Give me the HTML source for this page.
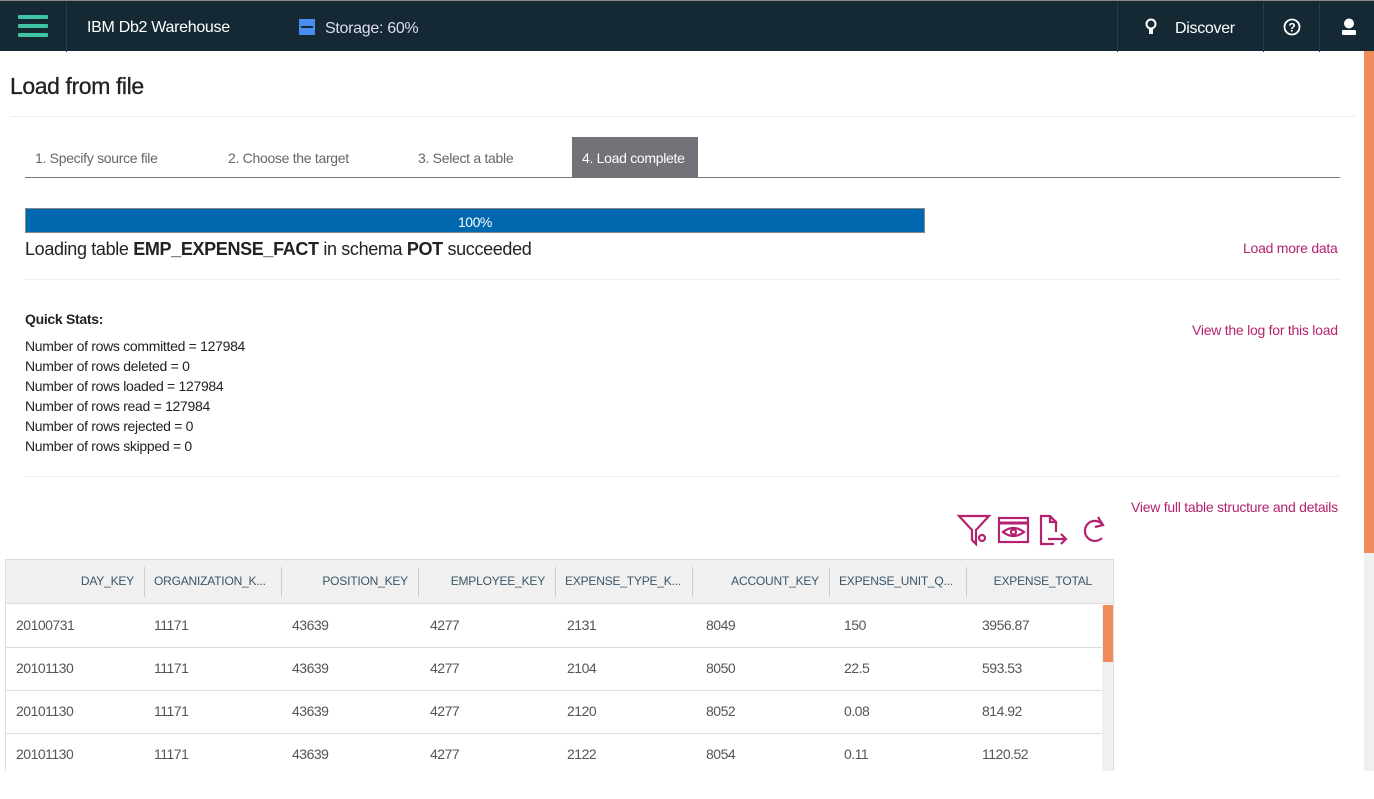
<!DOCTYPE html>
<html><head><meta charset="utf-8"><style>
*{box-sizing:border-box;margin:0;padding:0}
body{width:1374px;height:799px;overflow:hidden;background:#fff;font-family:"Liberation Sans",sans-serif;position:relative;color:#222}
.a{position:absolute;white-space:nowrap}
.hdr{position:absolute;left:0;top:0;width:1374px;height:51px;background:#152935;border-top:1px solid #888}
.sep{position:absolute;top:1px;width:1px;height:50px;background:#253d4c}
.nx{color:#fff;font-size:16px;letter-spacing:-0.3px}
.link{color:#b4226f;font-size:14px;letter-spacing:-0.25px}
.s{font-size:14px;color:#222;letter-spacing:-0.3px}
.tab{font-size:14px;color:#666;letter-spacing:-0.3px}
.th{position:absolute;top:559px;height:45px;font-size:12px;color:#3b5568;text-align:right;line-height:45px;letter-spacing:-0.2px}
.td{position:absolute;font-size:14px;color:#555;letter-spacing:-0.5px}
</style></head><body>
<div class="hdr">
 <div style="position:absolute;left:18px;top:14px;width:30px;height:4px;background:#3fc5a6;border-radius:1px"></div>
 <div style="position:absolute;left:18px;top:23px;width:30px;height:4px;background:#3fc5a6;border-radius:1px"></div>
 <div style="position:absolute;left:18px;top:32px;width:30px;height:4px;background:#3fc5a6;border-radius:1px"></div>
 <div class="sep" style="left:66px"></div>
 <div class="a nx" style="left:87px;top:18px">IBM Db2 Warehouse</div>
 <div style="position:absolute;left:299px;top:18px;width:16px;height:16px;background:#4a8cf0"></div>
 <div style="position:absolute;left:301px;top:25px;width:12px;height:2px;background:#152935"></div>
 <div class="a nx" style="left:325px;top:19px;color:#dde">Storage: 60%</div>
 <div class="sep" style="left:1117px"></div>
 <svg class="a" style="left:1143px;top:16px" width="16" height="20" viewBox="0 0 16 20"><circle cx="8" cy="7" r="4.5" fill="none" stroke="#fff" stroke-width="2"/><rect x="6" y="12" width="4" height="5" fill="#fff"/></svg>
 <div class="a nx" style="left:1175px;top:19px">Discover</div>
 <div class="sep" style="left:1263px"></div>
 <svg class="a" style="left:1282px;top:16px" width="20" height="20" viewBox="0 0 20 20"><circle cx="10" cy="10" r="7.5" fill="none" stroke="#fff" stroke-width="1.8"/><text x="10" y="14.5" font-size="12" font-weight="bold" fill="#fff" text-anchor="middle" font-family="Liberation Sans">?</text></svg>
 <div class="sep" style="left:1319px"></div>
 <svg class="a" style="left:1340px;top:16px" width="18" height="20" viewBox="0 0 18 20"><circle cx="9" cy="6.5" r="5" fill="#fff"/><rect x="2" y="13" width="14" height="5" rx="1" fill="#fff"/></svg>
</div>
<div style="position:absolute;left:1364px;top:51px;width:10px;height:720px;background:#f0f0f0"></div>
<div style="position:absolute;left:1364px;top:51px;width:10px;height:502px;background:#f08c5a"></div>

<div class="a" style="left:10px;top:73px;font-size:23px;color:#222;letter-spacing:-0.4px;-webkit-text-stroke:0.3px #222">Load from file</div>
<div style="position:absolute;left:10px;top:116px;width:1345px;height:1px;background:#eee"></div>

<div style="position:absolute;left:25px;top:177px;width:1315px;height:1px;background:#777"></div>
<div class="a tab" style="left:35px;top:150px">1. Specify source file</div>
<div class="a tab" style="left:228px;top:150px">2. Choose the target</div>
<div class="a tab" style="left:418px;top:150px">3. Select a table</div>
<div style="position:absolute;left:572px;top:137px;width:126px;height:41px;background:#737278"></div>
<div class="a tab" style="left:582px;top:150px;color:#fff">4. Load complete</div>

<div style="position:absolute;left:25px;top:208px;width:900px;height:25px;background:#0068ae;border:1px solid #888"></div>
<div class="a" style="left:458px;top:214px;font-size:14px;color:#fff;letter-spacing:-0.5px">100%</div>
<div class="a" style="left:25px;top:239px;font-size:18px;letter-spacing:-0.35px">Loading table <b>EMP_EXPENSE_FACT</b> in schema <b>POT</b> succeeded</div>
<div class="a link" style="left:1243px;top:240px">Load more data</div>
<div style="position:absolute;left:25px;top:279px;width:1315px;height:1px;background:#eee"></div>

<div class="a s" style="left:25px;top:311px;font-weight:bold">Quick Stats:</div>
<div class="a link" style="left:1192px;top:322px">View the log for this load</div>
<div class="a s" style="left:25px;top:336px;line-height:20px">Number of rows committed = 127984<br>Number of rows deleted = 0<br>Number of rows loaded = 127984<br>Number of rows read = 127984<br>Number of rows rejected = 0<br>Number of rows skipped = 0</div>
<div style="position:absolute;left:25px;top:476px;width:1315px;height:1px;background:#eee"></div>
<div class="a link" style="left:1131px;top:499px">View full table structure and details</div>

<svg class="a" style="left:956px;top:512px" width="152" height="36" viewBox="0 0 152 36" fill="none" stroke="#b4226f" stroke-width="2.2">
 <path d="M3 4H33L20 18V32L16 28V18Z"/><circle cx="26" cy="26" r="3"/>
 <rect x="43" y="6" width="29" height="24"/><path d="M43 11H72" stroke-width="3"/><path d="M47 20Q57 12 68 20Q57 28 47 20Z"/><circle cx="57.5" cy="20" r="2.5"/>
 <path d="M98 32H85V4H94L100 10V20"/><path d="M94 4V10H100"/><path d="M92 27H110M105 22L110 27L105 32"/>
 <path d="M147 13A10 10 0 1 0 146 26" /><path d="M142 5L147 13L139 15"/>
</svg>

<div style="position:absolute;left:5px;top:559px;width:1109px;height:212px;border:1px solid #ddd;border-bottom:none"></div>
<div style="position:absolute;left:6px;top:560px;width:1107px;height:44px;background:#f0f0f0;border-bottom:1px solid #ddd"></div>
<div style="position:absolute;left:1102px;top:605px;width:11px;height:166px;background:#f0f0f0"></div>
<div style="position:absolute;left:1103px;top:605px;width:10px;height:57px;background:#f08c5a"></div>
<div style="position:absolute;left:6px;top:647px;width:1096px;height:1px;background:#ddd"></div>
<div style="position:absolute;left:6px;top:690px;width:1096px;height:1px;background:#ddd"></div>
<div style="position:absolute;left:6px;top:733px;width:1096px;height:1px;background:#ddd"></div>

<div style="position:absolute;left:144px;top:567px;width:1px;height:30px;background:#ccc"></div>
<div style="position:absolute;left:281px;top:567px;width:1px;height:30px;background:#ccc"></div>
<div style="position:absolute;left:418px;top:567px;width:1px;height:30px;background:#ccc"></div>
<div style="position:absolute;left:555px;top:567px;width:1px;height:30px;background:#ccc"></div>
<div style="position:absolute;left:692px;top:567px;width:1px;height:30px;background:#ccc"></div>
<div style="position:absolute;left:829px;top:567px;width:1px;height:30px;background:#ccc"></div>
<div style="position:absolute;left:966px;top:567px;width:1px;height:30px;background:#ccc"></div>

<div class="th" style="left:6px;width:128px">DAY_KEY</div>
<div class="th" style="left:154px;width:127px;text-align:left">ORGANIZATION_K...</div>
<div class="th" style="left:282px;width:126px">POSITION_KEY</div>
<div class="th" style="left:419px;width:126px">EMPLOYEE_KEY</div>
<div class="th" style="left:565px;width:127px;text-align:left">EXPENSE_TYPE_K...</div>
<div class="th" style="left:693px;width:126px">ACCOUNT_KEY</div>
<div class="th" style="left:839px;width:127px;text-align:left">EXPENSE_UNIT_Q...</div>
<div class="th" style="left:967px;width:125px">EXPENSE_TOTAL</div>

<div class="td" style="left:16px;top:618px;line-height:43px;margin-top:-14px">20100731<br>20101130<br>20101130<br>20101130</div>
<div class="td" style="left:154px;top:618px;line-height:43px;margin-top:-14px">11171<br>11171<br>11171<br>11171</div>
<div class="td" style="left:292px;top:618px;line-height:43px;margin-top:-14px">43639<br>43639<br>43639<br>43639</div>
<div class="td" style="left:430px;top:618px;line-height:43px;margin-top:-14px">4277<br>4277<br>4277<br>4277</div>
<div class="td" style="left:567px;top:618px;line-height:43px;margin-top:-14px">2131<br>2104<br>2120<br>2122</div>
<div class="td" style="left:706px;top:618px;line-height:43px;margin-top:-14px">8049<br>8050<br>8052<br>8054</div>
<div class="td" style="left:844px;top:618px;line-height:43px;margin-top:-14px">150<br>22.5<br>0.08<br>0.11</div>
<div class="td" style="left:982px;top:618px;line-height:43px;margin-top:-14px">3956.87<br>593.53<br>814.92<br>1120.52</div>
<div style="position:absolute;left:0;top:771px;width:1374px;height:28px;background:#fff"></div>
</body></html>
